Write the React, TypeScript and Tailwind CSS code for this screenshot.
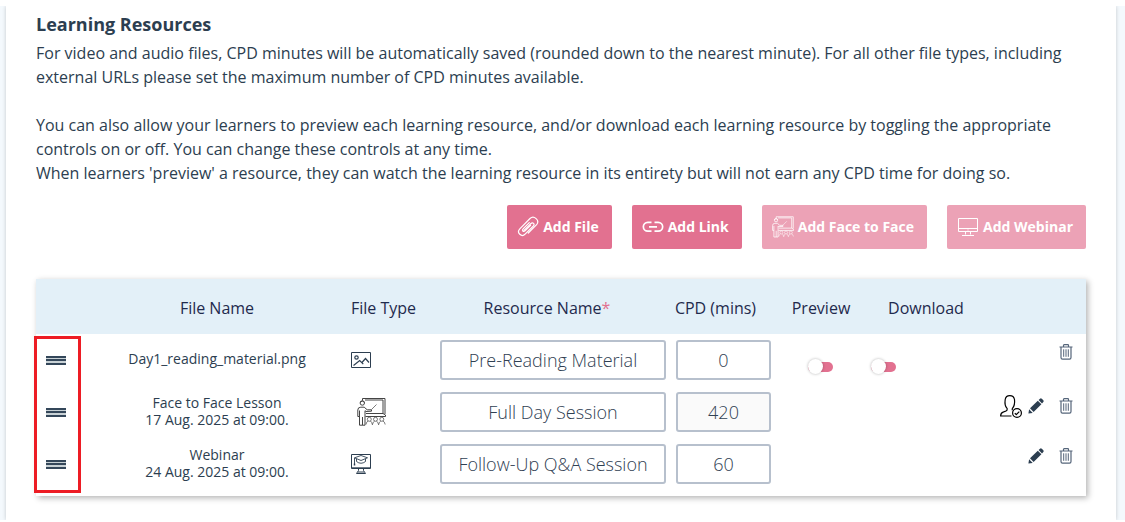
import React from "react";

type IconProps = { className?: string };

function PaperclipIcon({ className }: IconProps) {
  return (
    <svg viewBox="0 0 22 22" className={className} fill="none" stroke="currentColor" strokeWidth="1.2" strokeLinecap="round" strokeLinejoin="round" aria-hidden="true">
      <path d="M7 14.500 14 7.500c1.800-1.700 4.100.6 2.400 2.400l-8.300 8.300c-3.400 3.400-9-1.400-5.300-5.400L13 2.500c3.900-3.600 10.200 2 6.600 6.200l-8.300 8.300" />
      <path d="M12.300 6.600 6.300 12.600c-2 2 .2 3.700 1.700 2.300l5.600-5.600" />
    </svg>
  );
}

function LinkIcon({ className }: IconProps) {
  return (
    <svg viewBox="0 0 22 22" className={className} fill="none" stroke="currentColor" strokeWidth="1.7" aria-hidden="true">
      <path d="M9.500 6.300H5.800a4.400 4.400 0 0 0 0 8.900h3.700M12.500 6.300h3.700a4.400 4.400 0 0 1 0 8.900h-3.700M7 10.800h8" />
    </svg>
  );
}

function PresenterIcon({ className }: IconProps) {
  return (
    <svg viewBox="0 0 29 28" className={className} fill="none" stroke="currentColor" strokeWidth="1" aria-hidden="true">
      <path d="M5.500 2.500V.5h22.500v15.500M8 2h18v13.500M9 15.500h17l2.500 1.500v1.500H8.500" />
      <path d="M14.500 11.500 19.500 6.500" strokeWidth=".7" />
      <circle cx="5.300" cy="5" r="2.200" />
      <path d="M3 4.300q2.300-2.600 4.600 0" />
      <path d="M2.500 18.500H.8V12q0-2.800 3-2.800h3.400l3 2.600h4.300v1.400l-5.500.3-1-.8v14.500H5.500V19M2.500 12.500v14.700h3" />
      <g strokeWidth=".7">
        <path d="M9 26.500q.3-2.800 2.200-3.500M13.400 23q1.400.6 2 3.800.6-3.200 2.200-3.800M19.400 23q1.600.6 2.200 3.800.6-3.200 2.200-3.800M25.800 23q2 .7 2.400 3.500" />
        <circle cx="12.300" cy="21.300" r="2" />
        <circle cx="18.500" cy="21.300" r="2" />
        <circle cx="24.800" cy="21.300" r="2" />
      </g>
    </svg>
  );
}

function MonitorIcon({ className }: IconProps) {
  return (
    <svg viewBox="0 0 22 22" className={className} fill="none" stroke="currentColor" strokeWidth="1" aria-hidden="true">
      <path d="M1.500 2.500h19v13h-19zM1.500 12.500h19M8.500 15.500v3M13.500 15.500v3M5 19.500h12M10.500 14h1" />
    </svg>
  );
}

function PictureIcon({ className }: IconProps) {
  return (
    <svg viewBox="0 0 20 16" className={className} fill="none" stroke="currentColor" strokeWidth="1" aria-hidden="true">
      <path d="M.5.5h19v15H.5z" />
      <path d="M2.500 13.500 8.700 8.500l3.600 3.700M10.500 11 14.500 6.500l3.500 4" strokeWidth="1.200" />
      <circle cx="5.500" cy="5.500" r="1.700" strokeWidth="1.200" />
    </svg>
  );
}

function WebinarIcon({ className }: IconProps) {
  return (
    <svg viewBox="0 0 20 20" className={className} fill="none" stroke="currentColor" strokeWidth="1" aria-hidden="true">
      <path d="M.5.500h19v14H.5z" />
      <path d="M1 13.500h18" strokeWidth=".7" />
      <path d="M7.500 15v1.500L5.500 19.500h9l-2-3V15M7 18h6" />
      <path d="m10 1.500 6.500 2.300L10 6.500 3.500 3.800zM5.500 5v2.500q4.500 3.500 9 0V5M3.500 4v6" strokeWidth=".9" />
      <path d="M3.500 9.500v2" strokeWidth="1.500" />
    </svg>
  );
}

function TrashIcon({ className }: IconProps) {
  return (
    <svg viewBox="0 0 14 16" className={className} fill="none" stroke="currentColor" strokeWidth="1.200" aria-hidden="true">
      <path d="M.5 3h13M4.500 2.500V1.400q0-.7.700-.7h3.600q.7 0 .7.700v1.100M2 3v10.500q0 1.600 1.500 1.600h7q1.500 0 1.500-1.600V3" />
      <path d="M4.700 5.300v7.500M7 5.300v7.500M9.300 5.300v7.500" strokeWidth="1" />
    </svg>
  );
}

function PencilIcon({ className }: IconProps) {
  return (
    <svg viewBox="0 0 16 16" className={className} fill="currentColor" aria-hidden="true">
      <path d="M.4 15.600 1.100 11.300 4.700 14.900zM2 10.300l7.800-7.600 3.600 3.600-7.800 7.600zM10.600 2 12 .7q.9-.8 1.800 0l1.500 1.500q.8.900 0 1.800L14 5.400z" />
    </svg>
  );
}

function AttendeeIcon({ className }: IconProps) {
  return (
    <svg viewBox="0 0 22 23" className={className} fill="none" stroke="currentColor" strokeWidth="1.200" strokeLinejoin="round" aria-hidden="true">
      <path d="M11.500 21H.6q.1-3.300 3-4.100l2.500-.9q1.300-.5 1.100-2.300C5.500 12 4.600 8.500 5.200 4.500Q5.800.6 9.800.6t4.700 3.900c.5 4-.3 7-2.200 9.200l-.1 1.600" />
      <circle cx="17" cy="18" r="4.400" />
      <path d="m14.800 18.200 1.500 1.400 3-3" />
    </svg>
  );
}

function DragHandle({ label }: { label: string }) {
  return (
    <button type="button" aria-label={label} className="ml-[10px] flex h-[9px] w-5 cursor-grab flex-col justify-between bg-[#c9d2d6]">
      <span className="h-[2px] w-full bg-[#34475a]" />
      <span className="h-[2px] w-full bg-[#34475a]" />
      <span className="h-[2px] w-full bg-[#34475a]" />
    </button>
  );
}

function Toggle({ label }: { label: string }) {
  return (
    <input
      type="checkbox"
      role="switch"
      aria-label={label}
      className="relative mt-[14px] block h-4 w-[25px] cursor-pointer appearance-none before:absolute before:inset-x-0 before:top-[3px] before:h-[10px] before:rounded-full before:bg-[#e27190] after:absolute after:left-0 after:top-0 after:size-[15px] after:rounded-full after:bg-white after:shadow-[0_0_3px_rgba(0,0,0,0.3)] checked:after:left-[10px]"
    />
  );
}

const actions = [
  { label: "Add File", Icon: PaperclipIcon, disabled: false },
  { label: "Add Link", Icon: LinkIcon, disabled: false },
  { label: "Add Face to Face", Icon: PresenterIcon, disabled: true },
  { label: "Add Webinar", Icon: MonitorIcon, disabled: true },
];

const resources = [
  {
    file: ["Day1_reading_material.png"],
    icon: <PictureIcon className="h-4 w-5" />,
    name: "Pre-Reading Material",
    minutes: "0",
    locked: false,
    toggles: true,
    attendees: false,
    editable: false,
  },
  {
    file: ["Face to Face Lesson", "17 Aug. 2025 at 09:00."],
    icon: <PresenterIcon className="ml-[6px] h-7 w-[29px] text-[#444]" />,
    name: "Full Day Session",
    minutes: "420",
    locked: true,
    toggles: false,
    attendees: true,
    editable: true,
  },
  {
    file: ["Webinar", "24 Aug. 2025 at 09:00."],
    icon: <WebinarIcon className="size-5" />,
    name: "Follow-Up Q&A Session",
    minutes: "60",
    locked: false,
    toggles: false,
    attendees: false,
    editable: true,
  },
];

const field =
  "block h-10 w-full rounded-[3px] border-2 border-[#b7c0cd] px-2 text-center text-lg font-light text-[#2f4052]";

export default function App() {
  return (
    <div className="bg-white pt-[6px] font-['Open_Sans','Noto_Sans',sans-serif] text-[#2c3e50]">
      <div className="bg-[#f4f9fd] pl-[6px] pr-[9px]">
        <main className="bg-white px-[30px] pb-6 pt-[5px] shadow-[0_0_4px_rgba(0,0,0,0.2)] [clip-path:inset(0_-6px)]">
          <h2 className="text-lg leading-[27px] font-bold">Learning Resources</h2>
          <p className="mt-[3px] text-base leading-6">
            For video and audio files, CPD minutes will be automatically saved (rounded down to the nearest minute). For all
            other file types, including external URLs please set the maximum number of CPD minutes available.
          </p>
          <p className="mt-6 text-base leading-6">
            You can also allow your learners to preview each learning resource, and/or download each learning resource by
            toggling the appropriate controls on or off. You can change these controls at any time.
          </p>
          <p className="text-base leading-6">
            When learners 'preview' a resource, they can watch the learning resource in its entirety but will not earn any
            CPD time for doing so.
          </p>

          <div className="mt-5 flex flex-wrap justify-end gap-5">
            {actions.map(({ label, Icon, disabled }) => (
              <button
                key={label}
                type="button"
                disabled={disabled}
                className="flex h-11 items-center gap-1 rounded-[2px] bg-[#e27190] pl-[10px] pr-[13px] text-sm font-bold text-white disabled:bg-[#eca2b6]"
              >
                <Icon className="size-[22px]" />
                {label}
              </button>
            ))}
          </div>

          <div className="relative mt-[30px] bg-white pb-[6px] shadow-[2px_2px_6px_rgba(0,0,0,0.3)]">
            <table className="w-full table-fixed border-collapse">
              <colgroup>
                <col className="w-[45px]" />
                <col />
                <col className="w-[84px]" />
                <col className="w-[236px]" />
                <col className="w-[105px]" />
                <col className="w-[90px]" />
                <col className="w-[120px]" />
                <col className="w-[100px]" />
              </colgroup>
              <thead className="bg-[#e3f0f8] text-base text-[#1f2a4d]">
                <tr className="h-[55px] *:pt-[2px] *:font-normal">
                  <td />
                  <th scope="col" className="pl-[2px]">File Name</th>
                  <th scope="col" className="text-left">File Type</th>
                  <th scope="col" id="resource-name" className="pr-3">
                    Resource Name<span className="text-[#e27190]">*</span>
                  </th>
                  <th scope="col" id="cpd-minutes" className="pr-4">CPD (mins)</th>
                  <th scope="col">Preview</th>
                  <th scope="col">Download</th>
                  <td />
                </tr>
              </thead>
              <tbody>
                {resources.map((r) => (
                  <tr key={r.name} className="h-[52px]">
                    <td>
                      <DragHandle label={`Move ${r.name}`} />
                    </td>
                    <td className="pb-[3px] pl-[2px] text-center text-sm leading-[17px]">
                      {r.file.map((line) => (
                        <div key={line}>{line}</div>
                      ))}
                    </td>
                    <td>{r.icon}</td>
                    <td className="px-[5px]">
                      <input type="text" aria-labelledby="resource-name" defaultValue={r.name} className={field} />
                    </td>
                    <td className="px-[5px]">
                      <input
                        type="text"
                        inputMode="numeric"
                        aria-labelledby="cpd-minutes"
                        defaultValue={r.minutes}
                        disabled={r.locked}
                        className={`${field} disabled:bg-[#fafafa]`}
                      />
                    </td>
                    <td className="pl-8">{r.toggles && <Toggle label={`Preview ${r.name}`} />}</td>
                    <td className="pl-[5px]">{r.toggles && <Toggle label={`Download ${r.name}`} />}</td>
                    <td className={r.attendees ? "pr-[13px] pb-3" : "pr-[13px] pb-4"}>
                      <div className="flex items-center justify-end">
                        {r.attendees && (
                          <button type="button" aria-label="Manage attendees" className="mr-[6px] text-black">
                            <AttendeeIcon className="h-[23px] w-[22px]" />
                          </button>
                        )}
                        {r.editable && (
                          <button type="button" aria-label={`Edit ${r.name}`} className="mr-[15px]">
                            <PencilIcon className="size-4" />
                          </button>
                        )}
                        <button type="button" aria-label={`Delete ${r.name}`} className="text-[#55657a]">
                          <TrashIcon className="h-4 w-[14px]" />
                        </button>
                      </div>
                    </td>
                  </tr>
                ))}
              </tbody>
            </table>
            <div className="pointer-events-none absolute -left-[2px] bottom-[3px] top-[57px] w-[47px] border-[3px] border-[#ed1c24]" />
          </div>
        </main>
      </div>
    </div>
  );
}
